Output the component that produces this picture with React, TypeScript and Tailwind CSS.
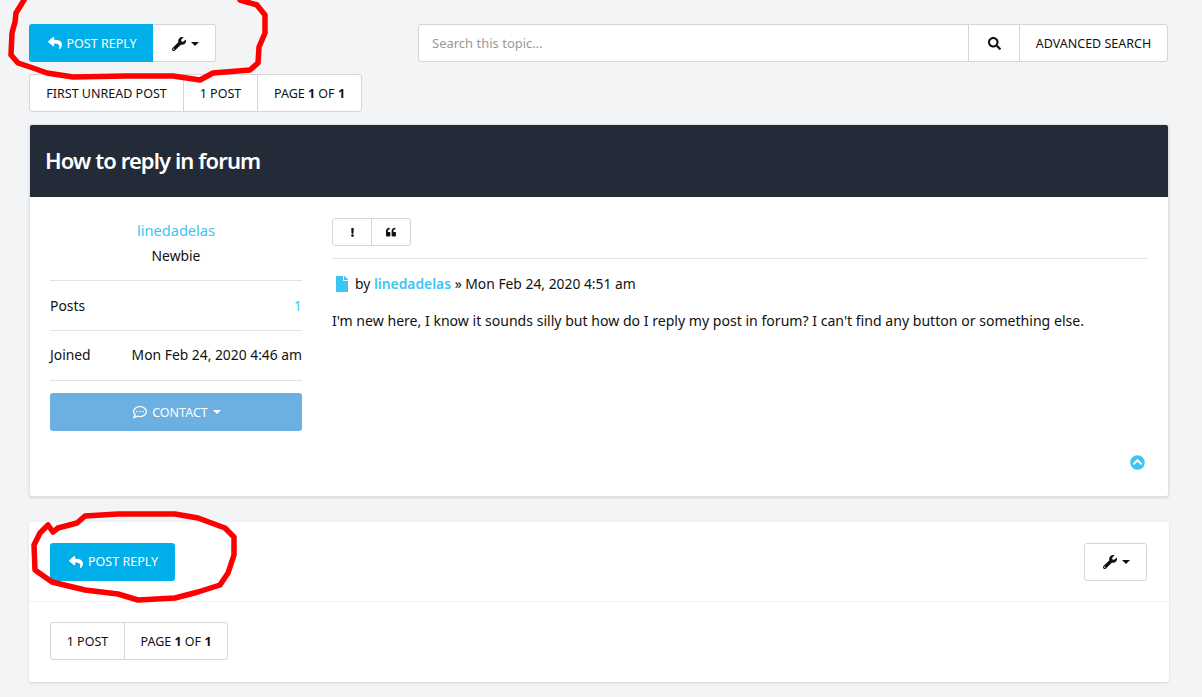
import React from 'react';
import { FaReply, FaWrench, FaSearch, FaExclamation, FaQuoteLeft, FaFile, FaChevronCircleUp, FaRegCommentDots } from 'react-icons/fa';

const Caret = () => (
    <span className="inline-block w-0 h-0 border-x-[4px] border-x-transparent border-t-[4px] border-t-current"></span>
);

const Segment = ({ children, className = '' }: { children: React.ReactNode; className?: string }) => (
    <div className={`flex items-center justify-center h-full pt-[2px] whitespace-nowrap border-l border-[#d5d5d5] first:border-l-0 ${className}`}>
        {children}
    </div>
);

const Pagination = ({ first }: { first?: boolean }) => (
    <div className="flex w-fit items-center h-[38px] bg-white border border-[#d5d5d5] rounded-[3px] text-[12.5px] text-[#111]">
        {first && <Segment className="w-[153px]">FIRST UNREAD POST</Segment>}
        <Segment className={first ? 'w-[74px]' : 'w-[73px]'}>1 POST</Segment>
        <Segment className={first ? 'w-[104px]' : 'w-[103px]'}>
            <span>PAGE <b>1</b> OF <b>1</b></span>
        </Segment>
    </div>
);

const PostReply = ({ className }: { className: string }) => (
    <button className={`flex items-center justify-center gap-[5px] h-[38px] pl-[2px] bg-[#00aeea] text-white text-[12.5px] ${className}`}>
        <FaReply className="text-[14px]" />
        <span className="pt-[2px]">POST REPLY</span>
    </button>
);

const ToolsButton = ({ className }: { className: string }) => (
    <button className={`flex items-center justify-center gap-[5px] w-[63px] h-[38px] pl-[2px] pt-[1px] bg-white border border-[#d5d5d5] ${className}`}>
        <FaWrench className="text-[14px]" />
        <Caret />
    </button>
);

// hand drawn red circles on top of the page
const Scribbles = () => (
    <svg className="absolute left-0 top-0 pointer-events-none" width="1202" height="697" fill="none" stroke="#fe0000" strokeWidth="5.5" strokeLinejoin="round" strokeLinecap="round">
        <path d="M24 0 L16 13 L15 22 L12 33 L11 55 L18 63 L33 68 L47 73 L73 77 L127 76 L173 76 L200 80 L213 73 L250 70 L258 63 L259 47 L265 33 L265 15 L257 5 L240 0" />
        <path d="M53 532 L48 525 L40 533 L34 545 L35 570 L52 582 L85 590 L118 594 L138 600 L175 598 L198 592 L220 585 L228 573 L234 555 L234 537 L225 528 L198 518 L175 514 L118 514 L85 516 L77 523 L58 528 Z" />
    </svg>
);

export default function App() {
    return (
        <div className="relative min-h-[697px] bg-[#f3f4f6] font-['Noto_Sans',sans-serif] text-[13.85px] text-[#111] overflow-hidden">
            <div className="flex flex-col pl-[29px] pr-[33px] pt-6">
                {/* Top action bar */}
                <div className="flex justify-between">
                    <div className="flex">
                        <PostReply className="w-[124px] rounded-l-[3px]" />
                        <ToolsButton className="border-l-0 rounded-r-[3px]" />
                    </div>
                    <div className="flex w-[750px] h-[38px] mr-[1px] bg-white border border-[#d5d5d5] rounded-[3px]">
                        <div className="flex-1 flex items-center pl-[13px] pt-[1px] text-[13px] text-[#999]">Search this topic…</div>
                        <div className="flex items-center justify-center w-[51px] border-l border-[#d5d5d5]">
                            <FaSearch className="text-[13px]" />
                        </div>
                        <div className="flex items-center justify-center w-[148px] pt-[2px] border-l border-[#d5d5d5] text-[12.5px]">ADVANCED SEARCH</div>
                    </div>
                </div>
                <div className="mt-3">
                    <Pagination first />
                </div>

                {/* Post */}
                <div className="mt-3 h-[373px] bg-white rounded-[3px] border border-[#e2e2e2] shadow-sm overflow-hidden">
                    <div className="flex items-center h-[72px] pl-[15px] pb-[2px] bg-[#232b38] text-[22px] font-semibold tracking-[-0.9px] text-white">How to reply in forum</div>
                    <div className="flex px-5 pt-[21px]">
                        <div className="w-[252px] shrink-0">
                            <div className="text-center text-[14.6px] text-[#3cc5f3] leading-[20px] pt-[2px]">linedadelas</div>
                            <div className="text-center mt-[6px] leading-[20px]">Newbie</div>
                            <div className="flex justify-between items-center h-[51px] pt-[1px] mt-[14px] border-y border-[#e2e2e2]">
                                <span>Posts</span>
                                <span className="text-[#3cc5f3]">1</span>
                            </div>
                            <div className="flex justify-between items-center h-[50px] border-b border-[#e2e2e2]">
                                <span>Joined</span>
                                <span>Mon Feb 24, 2020 4:46 am</span>
                            </div>
                            <button className="flex items-center justify-center gap-[5px] w-full h-[38px] pl-[2px] mt-3 bg-[#6cb0e1] rounded-[3px] text-white text-[12.5px]">
                                <FaRegCommentDots className="text-[14px]" />
                                <span className="pt-[2px]">CONTACT</span>
                                <Caret />
                            </button>
                        </div>
                        <div className="flex-1 ml-[30px]">
                            <div className="flex w-[79px] h-[28px] border border-[#d5d5d5] rounded-[3px]">
                                <div className="flex items-center justify-center w-[39px] border-r border-[#d5d5d5]">
                                    <FaExclamation className="text-[9px]" />
                                </div>
                                <div className="flex items-center justify-center flex-1">
                                    <FaQuoteLeft className="text-[10px]" />
                                </div>
                            </div>
                            <div className="mt-3 pt-[13px] border-t border-[#e2e2e2] flex items-center gap-[5px] leading-[24px]">
                                <FaFile className="text-[16px] text-[#3cc5f3] ml-[2px]" />
                                <span>by <b className="font-semibold text-[#3cc5f3]">linedadelas</b> » Mon Feb 24, 2020 4:51 am</span>
                            </div>
                            <p className="mt-[13px] text-[14.08px] leading-[24px]">I'm new here, I know it sounds silly but how do I reply my post in forum? I can't find any button or something else.</p>
                            <div className="flex justify-end mt-[122px] pr-[3px]">
                                <FaChevronCircleUp className="text-[15px] text-[#3cc5f3]" />
                            </div>
                        </div>
                    </div>
                </div>

                {/* Bottom bar */}
                <div className="mt-[25px] h-[160px] bg-white rounded-[3px] shadow-sm">
                    <div className="flex items-center justify-between h-[80px] pl-[21px] pr-[22px] border-b border-[#f0f0f0]">
                        <PostReply className="w-[125px] rounded-[3px]" />
                        <ToolsButton className="rounded-[3px]" />
                    </div>
                    <div className="px-[21px] pt-[20px]">
                        <Pagination />
                    </div>
                </div>
            </div>
            <Scribbles />
        </div>
    );
}
